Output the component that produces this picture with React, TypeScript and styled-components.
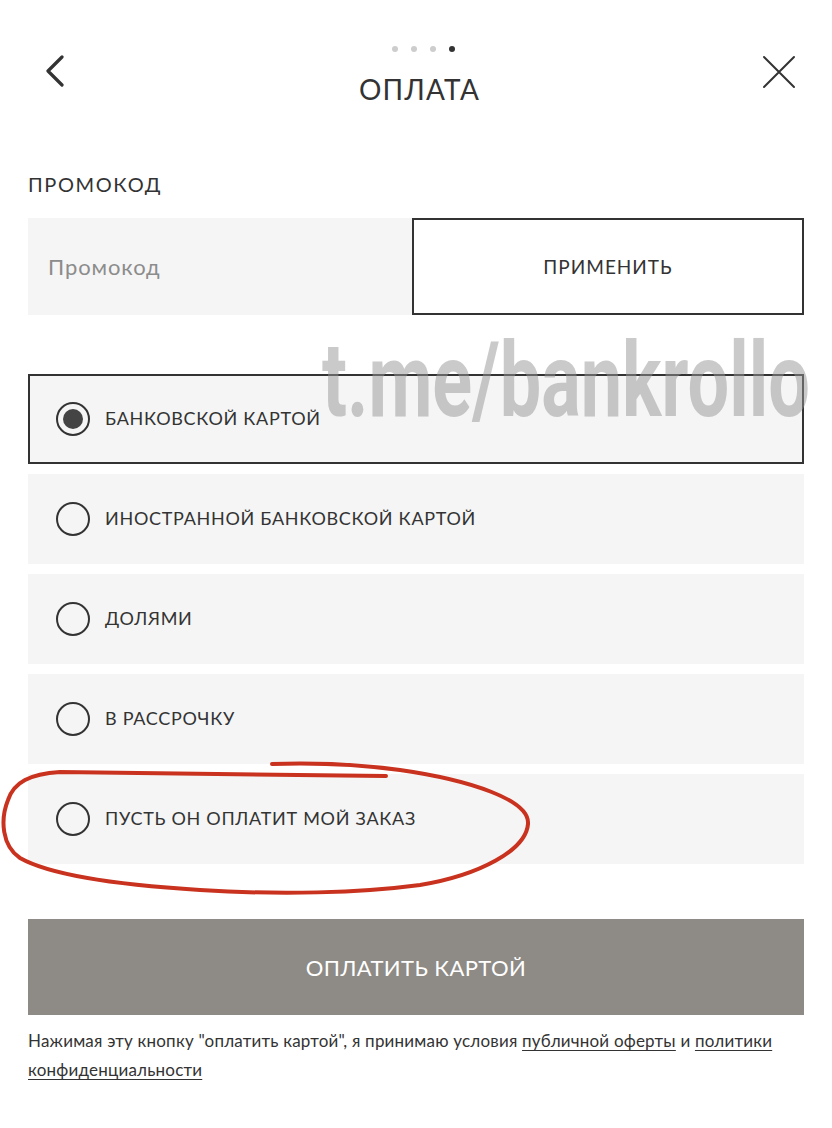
import styled, { createGlobalStyle } from "styled-components";

const GlobalStyle = createGlobalStyle`
    body {
        margin: 0;
        background: #fff;
        font-family: Lato, "Noto Sans", sans-serif;
        color: #333;
    }
`;

const Page = styled.div`
    position: relative;
    width: 832px;
    height: 1128px;
    box-sizing: border-box;
    padding: 0 28px;
    overflow: hidden;
`;

const Header = styled.header`
    display: grid;
    grid-template-columns: 1fr auto 1fr;
    align-items: start;
    padding: 46px 7px 0 14px;
`;

const IconButton = styled.button<{ $side: "left" | "right" }>`
    justify-self: ${(p) => (p.$side === "left" ? "start" : "end")};
    margin-top: 9px;
    padding: 0;
    border: 0;
    background: none;
    display: flex;
`;

const Center = styled.div`
    display: flex;
    flex-direction: column;
    align-items: center;
`;

const Dots = styled.div`
    display: flex;
    gap: 13px;
    margin-left: 8px;
`;

const Dot = styled.span<{ $active?: boolean }>`
    width: 6px;
    height: 6px;
    border-radius: 50%;
    background: ${(p) => (p.$active ? "#333" : "#cdcdcd")};
`;

const Title = styled.h1`
    margin: 22px 0 0;
    font-size: 28px;
    line-height: 30px;
    font-weight: 400;
    letter-spacing: 1.2px;
    color: #333;
`;

const Label = styled.h2`
    margin: 68px 0 0;
    font-size: 20px;
    line-height: 24px;
    font-weight: 400;
    letter-spacing: 1.6px;
    color: #333;
`;

const PromoRow = styled.div`
    display: grid;
    grid-template-columns: 384px 1fr;
    height: 97px;
    margin-top: 22px;
`;

const PromoInput = styled.input`
    border: 0;
    outline: none;
    background: #f5f5f5;
    padding: 0 20px;
    font-family: inherit;
    font-size: 22px;
    letter-spacing: 0.9px;
    color: #333;
    &::placeholder {
        color: #8c8c8c;
    }
`;

const ApplyButton = styled.button`
    border: 2px solid #333;
    background: #fff;
    font-family: inherit;
    font-size: 19px;
    letter-spacing: 1px;
    color: #333;
`;

const Options = styled.div`
    display: flex;
    flex-direction: column;
    gap: 10px;
    margin-top: 59px;
`;

const Option = styled.label<{ $selected?: boolean }>`
    display: flex;
    align-items: center;
    gap: 15px;
    height: 90px;
    box-sizing: border-box;
    background: #f5f5f5;
    border: 2px solid ${(p) => (p.$selected ? "#333" : "transparent")};
    padding: 0 0 3px 26px;
    font-size: 18px;
    letter-spacing: 0.7px;
    color: #333;
`;

const Radio = styled.span<{ $checked?: boolean }>`
    position: relative;
    width: 34px;
    height: 34px;
    margin-top: 3px;
    box-sizing: border-box;
    border: 2px solid #333;
    border-radius: 50%;
    flex-shrink: 0;
    &::after {
        content: "";
        position: absolute;
        inset: 5px;
        border-radius: 50%;
        background: #444;
        display: ${(p) => (p.$checked ? "block" : "none")};
    }
`;

const PayButton = styled.button`
    display: block;
    width: 100%;
    height: 96px;
    margin-top: 55px;
    border: 0;
    background: #8e8a85;
    color: #fff;
    font-family: inherit;
    font-size: 22px;
    letter-spacing: 0.4px;
`;

const Disclaimer = styled.p`
    margin: 11px 0 0;
    font-size: 17px;
    line-height: 29px;
    letter-spacing: 0.2px;
    color: #333;
`;

const Link = styled.a`
    color: #333;
    text-decoration: underline;
    text-underline-offset: 3px;
`;

const Watermark = styled.div`
    position: absolute;
    left: 322px;
    top: 326px;
    font-family: Roboto, sans-serif;
    font-weight: 700;
    font-size: 104px;
    line-height: 110px;
    color: rgba(150, 150, 150, 0.5);
    transform: scaleX(0.71);
    transform-origin: left top;
    white-space: nowrap;
    pointer-events: none;
`;

const Scribble = styled.svg`
    position: absolute;
    left: 0;
    top: 755px;
    pointer-events: none;
`;

const options = [
    "БАНКОВСКОЙ КАРТОЙ",
    "ИНОСТРАННОЙ БАНКОВСКОЙ КАРТОЙ",
    "ДОЛЯМИ",
    "В РАССРОЧКУ",
    "ПУСТЬ ОН ОПЛАТИТ МОЙ ЗАКАЗ",
];

const App = () => {
    return (
        <Page>
            <GlobalStyle />
            <Header>
                <IconButton $side="left" aria-label="Назад">
                    <svg width="24" height="32" viewBox="0 0 24 32">
                        <path d="M20 2 L6 16 L20 30" fill="none" stroke="#333" strokeWidth="3.2" strokeLinecap="round" strokeLinejoin="round" />
                    </svg>
                </IconButton>
                <Center>
                    <Dots>
                        <Dot />
                        <Dot />
                        <Dot />
                        <Dot $active />
                    </Dots>
                    <Title>ОПЛАТА</Title>
                </Center>
                <IconButton $side="right" aria-label="Закрыть">
                    <svg width="36" height="34" viewBox="0 0 36 34">
                        <path d="M3 2 L33 32 M33 2 L3 32" fill="none" stroke="#333" strokeWidth="2" strokeLinecap="round" />
                    </svg>
                </IconButton>
            </Header>

            <Label>ПРОМОКОД</Label>
            <PromoRow>
                <PromoInput placeholder="Промокод" />
                <ApplyButton>ПРИМЕНИТЬ</ApplyButton>
            </PromoRow>

            <Options>
                {options.map((text, i) => (
                    <Option key={text} $selected={i === 0}>
                        <Radio $checked={i === 0} />
                        {text}
                    </Option>
                ))}
            </Options>

            <PayButton>ОПЛАТИТЬ КАРТОЙ</PayButton>
            <Disclaimer>
                {'Нажимая эту кнопку "оплатить картой", я принимаю условия '}
                <Link href="#">публичной оферты</Link>
                {" и "}
                <Link href="#">политики</Link>{" "}
                <Link href="#">конфиденциальности</Link>
            </Disclaimer>

            <Watermark>t.me/bankrollo</Watermark>
            <Scribble width="540" height="150" viewBox="0 755 540 150">
                <path
                    d="M272 764 C330 762 370 766 400 770 C470 780 530 800 528 824 C526 850 480 875 420 885 C360 893 280 895 200 890 C120 885 50 875 20 858 C2 846 0 820 8 800 C14 782 30 774 60 772 L386 776"
                    fill="none"
                    stroke="#c8321e"
                    strokeWidth="4"
                    strokeLinecap="round"
                    strokeLinejoin="round"
                />
            </Scribble>
        </Page>
    );
};

export default App;
